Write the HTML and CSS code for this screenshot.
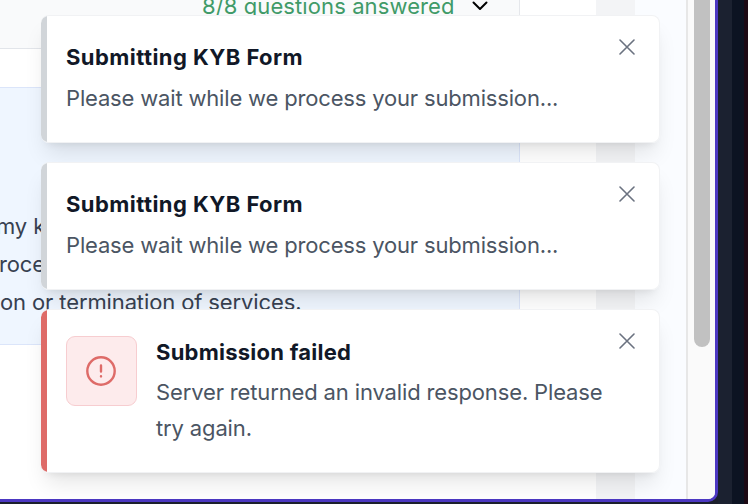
FILE: index.html
```
<!DOCTYPE html>
<html lang="en">
<head>
<meta charset="utf-8">
<title>KYB Form</title>
<link rel="stylesheet" href="styles.css">
</head>
<body>
<div class="desktop">
  <div class="window">
    <main class="form">
      <header class="form-header">
        <span class="answered">8/8 questions answered</span>
        <svg class="chevron" viewBox="0 0 18 12"><path d="M2.500 2.500 9 9l6.500-6.500"/></svg>
      </header>
      <div class="form-gap"></div>
      <section class="consent">
        <p><span class="line-start">my k</span><br><span class="line-second">roce</span><br>on or termination of services.</p>
      </section>
    </main>
    <div class="gutter"></div>
    <div class="rail"></div>
    <div class="side"></div>
    <div class="scrollbar"><div class="thumb"></div></div>
  </div>
  <div class="edge edge-slate"></div>
  <div class="edge edge-navy"></div>
  <div class="edge edge-plum"></div>
</div>
<div class="toasts">
  <article class="toast">
    <div class="toast-text">
      <h2>Submitting KYB Form</h2>
      <p>Please wait while we process your submission...</p>
    </div>
    <svg class="close" viewBox="0 0 16 16"><path d="m1 1 14 14M15 1 1 15"/></svg>
  </article>
  <article class="toast">
    <div class="toast-text">
      <h2>Submitting KYB Form</h2>
      <p>Please wait while we process your submission...</p>
    </div>
    <svg class="close" viewBox="0 0 16 16"><path d="m1 1 14 14M15 1 1 15"/></svg>
  </article>
  <article class="toast toast-error">
    <div class="toast-icon">
      <svg viewBox="0 0 30 30"><circle cx="15" cy="15" r="13.700"/><path d="M15 9.500v6M15 20.300v.1"/></svg>
    </div>
    <div class="toast-text">
      <h2>Submission failed</h2>
      <p>Server returned an invalid response. Please<br>try again.</p>
    </div>
    <svg class="close" viewBox="0 0 16 16"><path d="m1 1 14 14M15 1 1 15"/></svg>
  </article>
</div>
</body>
</html>
```
FILE: styles.css
```
* {
  box-sizing: border-box;
}

body {
  margin: 0;
  width: 748px;
  height: 504px;
  overflow: hidden;
  position: relative;
  font-family: Inter, "Liberation Sans", sans-serif;
  background: #1b1f2c;
}

h2,
p {
  margin: 0;
}

svg {
  fill: none;
  stroke-linecap: round;
  stroke-linejoin: round;
}

.desktop {
  display: grid;
  grid-template-columns: 718px 14px 12px 4px;
  height: 504px;
}

.window {
  display: grid;
  grid-template-columns: 520px 76px 39px 51px 1fr;
  height: 502px;
  border-right: 3px solid #4c38c2;
  border-bottom: 3px solid #4c38c2;
  border-bottom-right-radius: 10px;
  background: #fff;
  overflow: hidden;
}

.edge-slate {
  background: #1b2130;
}

.edge-navy {
  background: #0c1322;
}

.edge-plum {
  background: #1c0914;
}

.form {
  display: flex;
  flex-direction: column;
  overflow: hidden;
  white-space: nowrap;
}

.form-header {
  display: flex;
  height: 49px;
  padding-left: 202px;
  background: #f9fafb;
  border-right: 1px solid #e5e7eb;
  border-bottom: 1px solid #e2e5ea;
}

.answered {
  height: 28px;
  width: 269px;
  margin-top: -8px;
  font-size: 22px;
  line-height: 28px;
  letter-spacing: 0.1px;
  color: #409a68;
}

.chevron {
  width: 18px;
  height: 12px;
  stroke: #000;
  stroke-width: 2;
}

.form-gap {
  height: 38px;
  border-right: 1px solid #e5e7eb;
}

.consent {
  height: 258px;
  padding-top: 119px;
  background: #eff6ff;
  border: 1px solid #dbe5fa;
  border-left: 0;
}

.consent p {
  font-size: 22px;
  line-height: 38px;
  letter-spacing: -0.12px;
  color: #374151;
}

.line-start {
  margin-left: -4px;
}

.line-second {
  margin-left: -1px;
}

.rail {
  background: #f3f4f6;
}

.side {
  background: #fafcff;
}

.scrollbar {
  padding-left: 6px;
  background: #fafafa;
  border-left: 2px solid #e7e7e7;
}

.thumb {
  width: 16px;
  height: 347px;
  border-radius: 0 0 8px 8px;
  background: #c1c1c1;
}

.toasts {
  position: absolute;
  left: 41px;
  top: 15px;
  width: 619px;
  display: flex;
  flex-direction: column;
  gap: 19px;
}

.toast {
  --accent: #d1d5d9;
  position: relative;
  display: flex;
  gap: 19px;
  height: 128px;
  padding: 23px 0 0 25px;
  border: 1px solid #f1f2f4;
  border-left: 0;
  border-radius: 8px;
  background: linear-gradient(to right, var(--accent) 6px, #fff 6px);
  box-shadow: 0 15px 22px -5px rgb(0 0 0 / 10%), 0 6px 9px -6px rgb(0 0 0 / 10%);
}

.toast h2 {
  height: 36px;
  font-size: 22px;
  font-weight: 700;
  line-height: 36px;
  letter-spacing: 0.44px;
  color: #111827;
}

.toast p {
  margin-top: 5px;
  font-size: 22px;
  line-height: 36px;
  letter-spacing: -0.17px;
  color: #4b5563;
  white-space: nowrap;
}

.close {
  position: absolute;
  top: 23px;
  right: 24px;
  width: 16px;
  height: 16px;
  stroke: #6b7280;
  stroke-width: 1.600;
}

.toast-error {
  --accent: #de6b68;
  height: 164px;
  padding-top: 26px;
}

.toast-error .toast-text {
  margin-top: -2px;
}

.toast-error h2 {
  letter-spacing: 0.24px;
}

.toast-error p {
  margin-top: 4px;
  letter-spacing: -0.14px;
}

.toast-icon {
  display: grid;
  place-items: center;
  width: 71px;
  height: 70px;
  border: 1px solid #f7cdd0;
  border-radius: 9px;
  background: #fdebec;
}

.toast-icon svg {
  width: 30px;
  height: 30px;
  margin-right: 1px;
  stroke: #de6b68;
  stroke-width: 2.400;
}
```
